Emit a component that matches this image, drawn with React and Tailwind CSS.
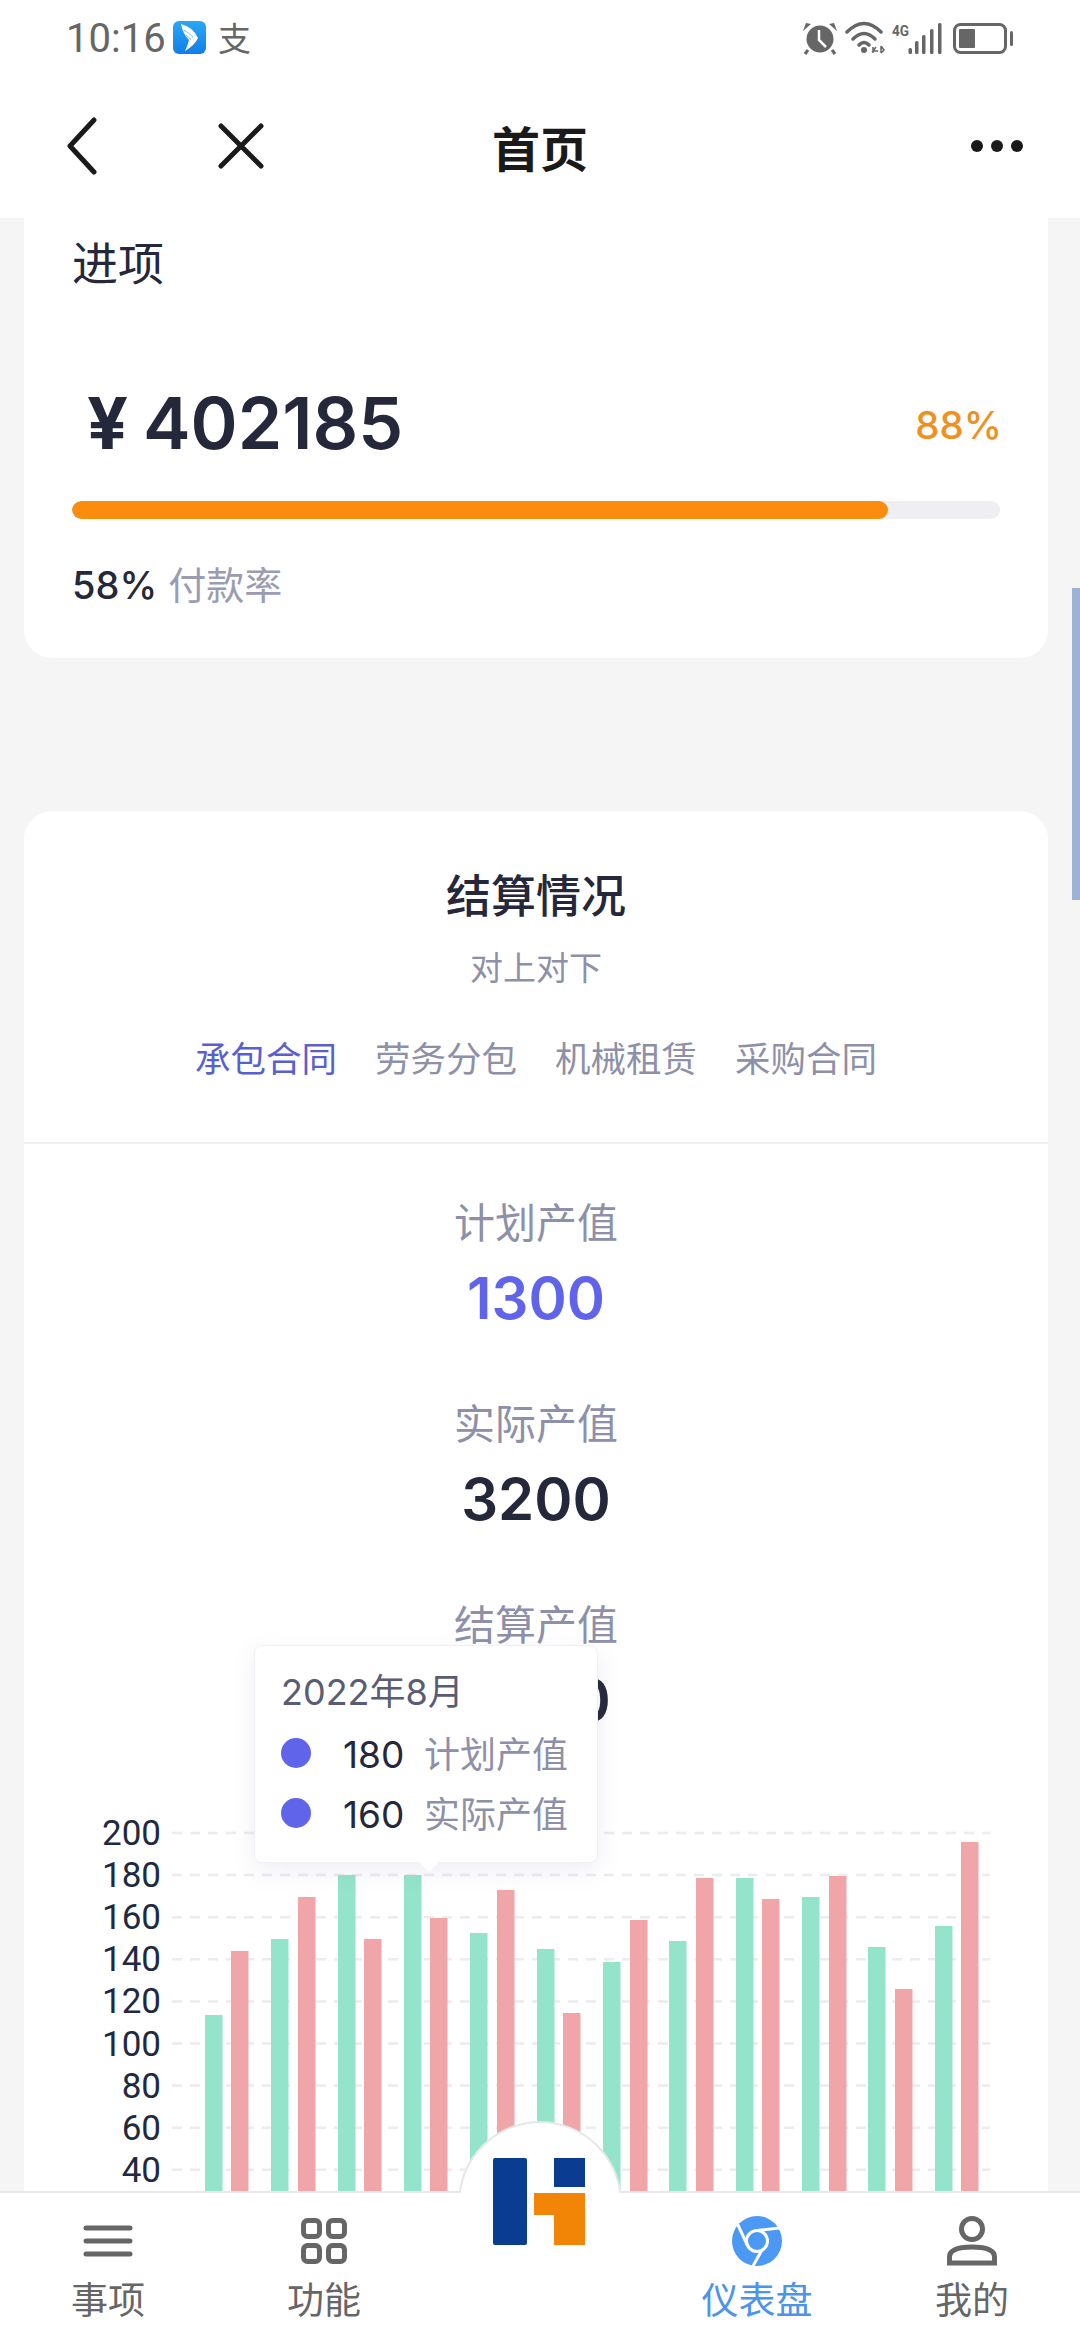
const bars = [
  [205, 2013, 'g'], [231, 1949, 'r'], [271, 1937, 'g'], [298, 1895, 'r'],
  [338, 1873, 'g'], [364, 1937, 'r'], [404, 1873, 'g'], [430, 1916, 'r'],
  [470, 1931, 'g'], [497, 1888, 'r'], [537, 1947, 'g'], [563, 2011, 'r'],
  [603, 1960, 'g'], [630, 1918, 'r'], [669, 1939, 'g'], [696, 1876, 'r'],
  [736, 1876, 'g'], [762, 1897, 'r'], [802, 1895, 'g'], [829, 1874, 'r'],
  [868, 1945, 'g'], [895, 1987, 'r'], [935, 1924, 'g'], [961, 1840, 'r'],
];
const ticks = [200, 180, 160, 140, 120, 100, 80, 60, 40];

function StatusBar() {
  return (
    <div className="h-[76px] bg-white flex items-start pt-[21px] pl-[66px] pr-[67px] shrink-0">
      <span className="font-['Roboto',sans-serif] text-[40px] leading-[36px] text-[#666666] w-[107px]">10:16</span>
      <svg width="33" height="33" viewBox="0 0 33 33">
        <defs>
          <linearGradient id="ali" x1="0" y1="0" x2="0" y2="1">
            <stop offset="0" stopColor="#2aa7f5" />
            <stop offset="1" stopColor="#0f7fe8" />
          </linearGradient>
        </defs>
        <rect width="33" height="33" rx="6" fill="url(#ali)" />
        <path d="M8 3 Q20 6 25 17 Q22 24 12 30 Q15 24 16 19 Q10 13 8 3 Z" fill="#ffffff" />
        <path d="M11 9 Q16 12 20 16 M13 14 Q16 16 18 19" stroke="#7cc4f5" strokeWidth="1" fill="none" />
      </svg>
      <span className="ml-[12px] font-['Noto_Sans_CJK_SC',sans-serif] text-[33px] leading-[32px] text-[#666666]">支</span>
      <div className="flex-1" />
      <svg width="212" height="36" viewBox="801 20 212 36" fill="none">
        <g fill="#666666">
          <circle cx="820" cy="38" r="13.5" />
          <path d="M803 30 L811 23 L806 22 Z M837 30 L829 23 L834 22 Z" />
          <path d="M808 49 L805 53 M832 49 L835 53" stroke="#666666" strokeWidth="3" />
        </g>
        <path d="M819 29 V39 L826 46" stroke="#ffffff" strokeWidth="2.5" />
        <g stroke="#666666" strokeWidth="3.5" strokeLinecap="round">
          <path d="M847 31 Q864 14 881 31" />
          <path d="M853 38 Q864 27 875 38" />
          <path d="M859 44 Q864 39 869 44" />
        </g>
        <circle cx="864" cy="49" r="3" fill="#666666" />
        <path d="M873 46 V52 M876 46 L873 50 H878 M881 45 V52 M881 45 L884 49 L881 52" stroke="#666666" strokeWidth="1.5" />
        <text x="892" y="35" fontFamily="Roboto, sans-serif" fontWeight="700" fontSize="14" fill="#666666" textLength="17" lengthAdjust="spacingAndGlyphs">4G</text>
        <g fill="#666666">
          <rect x="908.5" y="47" width="3.5" height="6" rx="1.5" />
          <rect x="915" y="40" width="3.5" height="13" rx="1.5" />
          <rect x="922" y="34" width="3.5" height="19" rx="1.5" />
          <rect x="930" y="28" width="3.5" height="25" rx="1.5" />
          <rect x="938" y="22" width="3.5" height="31" rx="1.5" />
          <rect x="959" y="28" width="16" height="19" rx="1" />
          <rect x="1010" y="30" width="3" height="15" rx="1.5" />
        </g>
        <rect x="954.5" y="23.5" width="51" height="28" rx="6" stroke="#666666" strokeWidth="3" />
      </svg>
    </div>
  );
}

function Header() {
  return (
    <div className="h-[142px] bg-white flex items-center pl-[66px] pr-[57px] shrink-0 pb-[2px]">
      <div className="flex-1 flex items-center gap-[120px]">
        <svg width="32" height="58" viewBox="0 0 32 58" fill="none">
          <path d="M28 3 L4 29 L28 55" stroke="#1a1a1a" strokeWidth="5" strokeLinecap="round" strokeLinejoin="round" />
        </svg>
        <svg width="46" height="46" viewBox="0 0 46 46" fill="none">
          <path d="M3 3 L43 43 M43 3 L3 43" stroke="#1a1a1a" strokeWidth="5" strokeLinecap="round" />
        </svg>
      </div>
      <span className="font-['Noto_Sans_CJK_SC',sans-serif] font-bold text-[48px] leading-[60px] text-[#1a1a1a] -ml-[9px]">首页</span>
      <div className="flex-1 flex justify-end gap-[8px]">
        <span className="w-[12px] h-[12px] rounded-full bg-[#1a1a1a]" />
        <span className="w-[12px] h-[12px] rounded-full bg-[#1a1a1a]" />
        <span className="w-[12px] h-[12px] rounded-full bg-[#1a1a1a]" />
      </div>
    </div>
  );
}

function TopCard() {
  return (
    <div className="h-[440px] bg-white rounded-b-[28px] pl-[48px] pr-[48px] flex flex-col">
      <div className="text-[46px] leading-[60px] text-[#25273a] mt-[15px]">进项</div>
      <div className="flex items-center justify-between mt-[90px] h-[80px]">
        <div className="flex items-center pl-[15px] font-semibold text-[#25273a]">
          <span className="text-[72px] leading-[80px] w-[56px] font-bold">¥</span>
          <span className="text-[71.5px] leading-[80px]">402185</span>
        </div>
        <span className="text-[38.5px] leading-[50px] font-medium text-[#f0901e] mt-[4px] -mr-[2px]">88%</span>
      </div>
      <div className="mt-[38px] h-[18px] rounded-full bg-[#eeeef3] overflow-hidden">
        <div className="h-full w-[816px] rounded-full bg-[#fb8c0e]" />
      </div>
      <div className="mt-[41px] text-[38px] leading-[50px] flex items-center gap-[11px]">
        <span className="font-medium text-[#25273a]">58%</span>
        <span className="text-[#9a9db2]">付款率</span>
      </div>
    </div>
  );
}

function Metric({ label, value, color }) {
  return (
    <div className="flex flex-col items-center">
      <div className="text-[41px] leading-[60px] text-[#8d90a8]">{label}</div>
      <div className={`mt-[10px] text-[58px] leading-[70px] font-semibold ${color}`}>{value}</div>
    </div>
  );
}

function Chart() {
  return (
    <svg width="1024" height="420" viewBox="24 1810 1024 420" className="mt-[77px] block">
      {ticks.map((t, i) => (
        <g key={t}>
          <line x1="172" x2="990" y1={1831 + i * 42.1} y2={1831 + i * 42.1} stroke="#ececef" strokeWidth="2.5" strokeDasharray="10 8" />
          <text x="161" y={1843 + i * 42.1} textAnchor="end" fontFamily="Roboto, sans-serif" fontSize="35" fill="#1e2a3f">{t}</text>
        </g>
      ))}
      {bars.map(([x, top, c]) => (
        <rect key={x} x={x} y={top} width="17.5" height={2300 - top} fill={c === 'g' ? '#8fe3c8' : '#efa3a6'} fillOpacity="0.97" />
      ))}
    </svg>
  );
}

function Tooltip() {
  return (
    <div className="absolute left-[230px] top-[834px] w-[344px] h-[218px] bg-white rounded-[8px] border border-[#f0f0f5] shadow-[0_8px_24px_rgba(120,125,170,0.12)] pl-[26px] pt-[24px]">
      <div className="absolute left-[166px] -bottom-[8px] w-[16px] h-[16px] bg-white rotate-45 border-r border-b border-[#f4f4f8]" />
      <div className="text-[36px] leading-[44px] text-[#5a5c75]">2022年8月</div>
      <div className="flex items-center mt-[17px] h-[44px]">
        <span className="w-[30px] h-[30px] rounded-full bg-[#6064ea]" />
        <span className="ml-[32px] w-[81px] pt-[3px] text-[37px] leading-[44px] text-[#25273a]">180</span>
        <span className="pt-[3px] text-[36px] leading-[44px] text-[#8d90a8]">计划产值</span>
      </div>
      <div className="flex items-center mt-[16px] h-[44px]">
        <span className="w-[30px] h-[30px] rounded-full bg-[#6064ea]" />
        <span className="ml-[32px] w-[81px] pt-[3px] text-[37px] leading-[44px] text-[#25273a]">160</span>
        <span className="pt-[3px] text-[36px] leading-[44px] text-[#8d90a8]">实际产值</span>
      </div>
    </div>
  );
}

function SettleCard() {
  return (
    <div className="relative mt-[153px] bg-white rounded-t-[28px]">
      <div className="flex flex-col items-center pt-[56px] pb-[57px] border-b-2 border-[#f0f0f3]">
        <div className="text-[45px] leading-[60px] font-medium text-[#25273a]">结算情况</div>
        <div className="mt-[19px] text-[33px] leading-[44px] text-[#8d90a8]">对上对下</div>
        <div className="mt-[45px] flex gap-[38px] text-[35.5px] leading-[50px] text-[#8d90a8]">
          <span className="text-[#5a5fd0]">承包合同</span>
          <span>劳务分包</span>
          <span>机械租赁</span>
          <span>采购合同</span>
        </div>
      </div>
      <div className="pt-[49px] flex flex-col gap-[61px]">
        <Metric label="计划产值" value="1300" color="text-[#6064ea]" />
        <Metric label="实际产值" value="3200" color="text-[#25273a]" />
        <Metric label="结算产值" value="2800" color="text-[#25273a]" />
      </div>
      <Chart />
      <Tooltip />
    </div>
  );
}

function NavItem({ label, active, children }) {
  return (
    <div className="flex flex-col items-center w-[120px]">
      <div className="h-[52px] flex items-center justify-center">{children}</div>
      <span className={`mt-[7px] text-[37px] leading-[48px] ${active ? 'text-[#4b94e8]' : 'text-[#666666]'}`}>{label}</span>
    </div>
  );
}

function BottomNav() {
  return (
    <div className="relative h-[149px] shrink-0 bg-white border-t-2 border-[#e8e8e8] flex pt-[22px] pl-[48px] font-['Noto_Sans_CJK_SC',sans-serif]">
      <div className="absolute left-[458px] -top-[72px] w-[164px] h-[72px] overflow-hidden">
        <div className="w-[164px] h-[164px] rounded-full bg-white border-2 border-[#e4e8e6]" />
      </div>
      <svg className="absolute left-[493px] -top-[35px]" width="92" height="87" viewBox="493 2157 92 87">
        <rect x="493" y="2157" width="34" height="87" rx="2" fill="#0a3d91" />
        <rect x="554" y="2157" width="31" height="29" fill="#0a3d91" />
        <path d="M534 2192 H585 V2244 H554 V2214 H534 Z" fill="#f28505" />
      </svg>
      <NavItem label="事项">
        <svg width="50" height="34" viewBox="0 0 50 34">
          <path d="M3 4 H47 M3 17 H47 M3 30 H47" stroke="#666666" strokeWidth="5" strokeLinecap="round" />
        </svg>
      </NavItem>
      <div className="ml-[96px]">
        <NavItem label="功能">
          <svg width="46" height="46" viewBox="0 0 46 46" fill="none" stroke="#666666" strokeWidth="5">
            <rect x="2.5" y="2.5" width="16" height="16" rx="4" />
            <rect x="27.5" y="2.5" width="16" height="16" rx="4" />
            <rect x="2.5" y="27.5" width="16" height="16" rx="4" />
            <rect x="27.5" y="27.5" width="16" height="16" rx="4" />
          </svg>
        </NavItem>
      </div>
      <div className="ml-[313px]">
        <NavItem label="仪表盘" active>
          <svg width="50" height="50" viewBox="0 0 50 50" fill="none">
            <circle cx="25" cy="25" r="25" fill="#4b98f5" />
            <circle cx="25" cy="25" r="10.5" stroke="#ffffff" strokeWidth="3" />
            <path d="M25 14.5 L47 12 M15.5 29.5 L5.5 8 M30 34 L21 50" stroke="#ffffff" strokeWidth="3" />
          </svg>
        </NavItem>
      </div>
      <div className="ml-[95px]">
        <NavItem label="我的">
          <svg width="50" height="50" viewBox="0 0 50 50" fill="none">
            <circle cx="25" cy="13" r="10.5" stroke="#666666" strokeWidth="5" />
            <path d="M2.5 47 V41 Q2.5 31 25 31 Q47.5 31 47.5 41 V47 Z" stroke="#666666" strokeWidth="5" />
          </svg>
        </NavItem>
      </div>
    </div>
  );
}

export default function App() {
  return (
    <div className="relative w-[1080px] h-[2340px] overflow-hidden flex flex-col bg-[#f5f5f6] font-['Inter','Noto_Sans_CJK_SC',sans-serif]">
      <StatusBar />
      <Header />
      <div className="flex-1 min-h-0 overflow-hidden pl-[24px] pr-[32px]">
        <TopCard />
        <SettleCard />
      </div>
      <BottomNav />
      <div className="absolute right-0 top-[588px] w-[8px] h-[312px] bg-[#9db2d6]" />
    </div>
  );
}
